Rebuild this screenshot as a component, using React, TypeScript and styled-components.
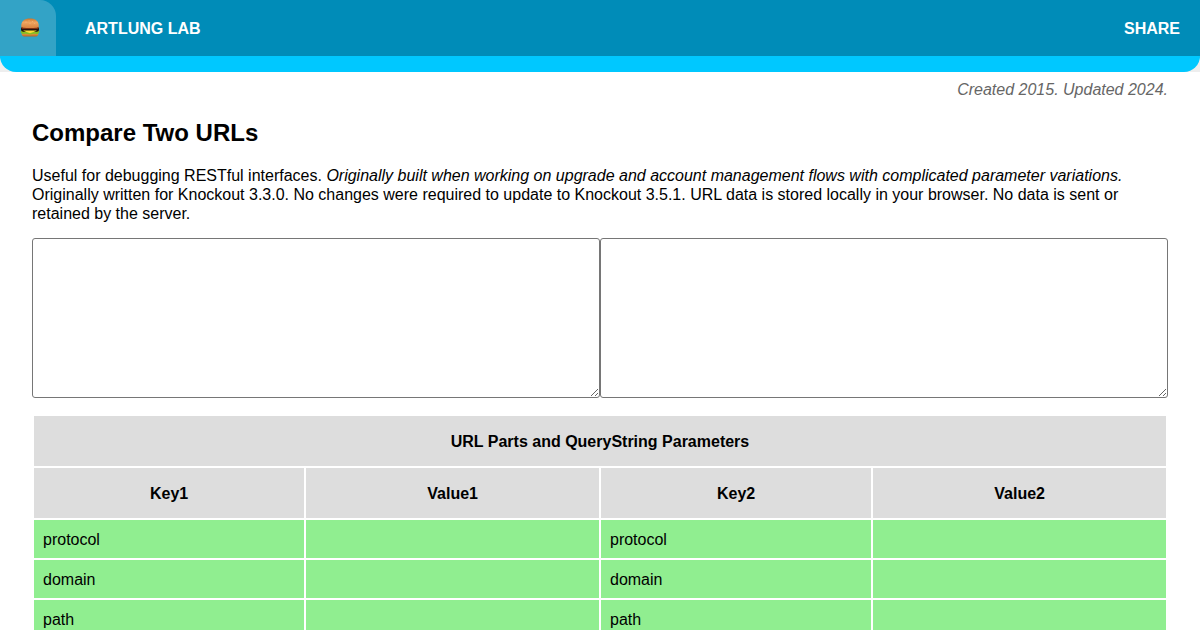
import React, { useState } from 'react';
import styled, { createGlobalStyle } from 'styled-components';

const GlobalStyle = createGlobalStyle`
  * { box-sizing: border-box; }
  html { overflow-x: hidden; scrollbar-width: none; }
  body {
    margin: 0;
    background: #fff;
    color: #000;
    font: 16px/19px "Liberation Sans", Helvetica, Arial, sans-serif;
  }
`;

const HeaderBackdrop = styled.div`
  background: #eee;
`;

const Header = styled.header`
  display: flex;
  align-items: stretch;
  height: 72px;
  background: #008cb8;
  border-bottom: 16px solid #00c8ff;
  border-radius: 0 0 16px 16px;
`;

const MenuButton = styled.button`
  display: flex;
  align-items: center;
  justify-content: center;
  width: 56px;
  padding: 0 0 0 4px;
  border: 0;
  border-radius: 0 16px 0 0;
  background: #33a3c6;
  cursor: pointer;
`;

const HeaderNav = styled.nav`
  display: flex;
  flex: 1;
  align-items: center;
  justify-content: space-between;
  padding: 1px 20px 0 29px;
`;

const HeaderLink = styled.a`
  color: #fff;
  font-weight: bold;
  text-decoration: none;
  text-transform: uppercase;
`;

const Main = styled.main`
  padding: 8px 32px 32px;
`;

const Dates = styled.p`
  margin: 0;
  color: #666;
  font-style: italic;
  text-align: right;
`;

const Title = styled.h1`
  margin: 20px 0 19px;
  font-size: 24px;
  line-height: 28px;
`;

const Intro = styled.p`
  margin: 0 0 15px;
`;

const Inputs = styled.div`
  display: flex;
  margin-bottom: 16px;
`;

const UrlInput = styled.textarea`
  flex: 1;
  min-width: 0;
  height: 160px;
  margin: 0;
  padding: 8px;
  border: 1px solid #767676;
  border-radius: 3px;
  background: #fff;
  font: inherit;
`;

const Table = styled.table`
  width: 100%;
  table-layout: fixed;
  border-collapse: separate;
  border-spacing: 2px;
`;

const Column = styled.col<{ $wide?: boolean }>`
  width: ${(p) => (p.$wide ? '26%' : '24%')};
`;

const HeadCell = styled.th`
  padding: 16px 16px 15px;
  background: #ddd;
`;

const Cell = styled.td`
  padding: 10px 9px 9px;
  background: lightgreen;
  overflow-wrap: anywhere;
`;

const Burger = () => (
  <svg width="20" height="20" viewBox="0 0 20 20" aria-hidden="true">
    <defs>
      <linearGradient id="bun-top" x1="0" y1="0" x2="0" y2="1">
        <stop offset="0" stopColor="#c9742b" />
        <stop offset="0.4" stopColor="#f0a560" />
        <stop offset="1" stopColor="#d9833f" />
      </linearGradient>
      <linearGradient id="bun-bottom" x1="0" y1="0" x2="0" y2="1">
        <stop offset="0" stopColor="#e9a552" />
        <stop offset="1" stopColor="#b8641f" />
      </linearGradient>
    </defs>
    <path d="M1.800 15h16.400v1.200c0 1.700-1.400 2.400-3.400 2.400H5.200c-2 0-3.400-.7-3.400-2.400z" fill="url(#bun-bottom)" />
    <path d="M.8 12.700q2-1.200 9.200-1.200t9.200 1.200q.6 1.900-.8 2.700-1.500.9-3 .4-1.300-.2-2.700.3-2.700.6-5.400 0-1.400-.5-2.700-.3-1.500.5-3-.4Q.2 14.600.8 12.700z" fill="#86bd22" />
    <path d="M1 10h18v2q-.3 1.500-2.200 1.700H3.200Q1.300 13.500 1 12z" fill="#26130c" />
    <path d="M3 12.600h14l-2.800 1.100-4.200 1.500-4.200-1.500z" fill="#fbdc35" />
    <path d="M1.200 9h17.600q.4 1.500-1.300 1.700H2.500Q.8 10.500 1.200 9z" fill="#9c3c16" />
    <path d="M1.200 8C1.300 3 4.400.4 10 .4S18.700 3 18.800 8c0 1.600-3.300 2.100-8.800 2.100S1.200 9.600 1.200 8z" fill="url(#bun-top)" />
    <g fill="#fbd9a1">
      <circle cx="6" cy="4" r=".4" />
      <circle cx="9" cy="2.800" r=".4" />
      <circle cx="12.500" cy="3.600" r=".4" />
      <circle cx="14.800" cy="5.300" r=".4" />
      <circle cx="10" cy="5.200" r=".4" />
    </g>
  </svg>
);

const parts = ['protocol', 'domain', 'path'] as const;

function parseUrl(text: string): Record<string, string> {
  try {
    const url = new URL(text.trim());
    return { protocol: url.protocol, domain: url.host, path: url.pathname };
  } catch {
    return {};
  }
}

export default function App() {
  const [first, setFirst] = useState('');
  const [second, setSecond] = useState('');
  const left = parseUrl(first);
  const right = parseUrl(second);

  return (
    <>
      <GlobalStyle />
      <HeaderBackdrop>
        <Header>
          <MenuButton type="button" aria-label="Menu">
            <Burger />
          </MenuButton>
          <HeaderNav>
            <HeaderLink href="#lab">Artlung Lab</HeaderLink>
            <HeaderLink href="#share">Share</HeaderLink>
          </HeaderNav>
        </Header>
      </HeaderBackdrop>
      <Main>
        <Dates>Created 2015. Updated 2024.</Dates>
        <Title>Compare Two URLs</Title>
        <Intro>
          Useful for debugging RESTful interfaces.{' '}
          <em>
            Originally built when working on upgrade and account management flows with complicated
            parameter variations.
          </em>{' '}
          Originally written for Knockout 3.3.0. No changes were required to update to Knockout
          3.5.1. URL data is stored locally in your browser. No data is sent or retained by the
          server.
        </Intro>
        <Inputs>
          <UrlInput aria-label="First URL" value={first} onChange={(e) => setFirst(e.target.value)} />
          <UrlInput aria-label="Second URL" value={second} onChange={(e) => setSecond(e.target.value)} />
        </Inputs>
        <Table>
          <colgroup>
            <Column />
            <Column $wide />
            <Column />
            <Column $wide />
          </colgroup>
          <thead>
            <tr>
              <HeadCell colSpan={4}>URL Parts and QueryString Parameters</HeadCell>
            </tr>
            <tr>
              <HeadCell>Key1</HeadCell>
              <HeadCell>Value1</HeadCell>
              <HeadCell>Key2</HeadCell>
              <HeadCell>Value2</HeadCell>
            </tr>
          </thead>
          <tbody>
            {parts.map((part) => (
              <tr key={part}>
                <Cell>{part}</Cell>
                <Cell>{left[part]}</Cell>
                <Cell>{part}</Cell>
                <Cell>{right[part]}</Cell>
              </tr>
            ))}
          </tbody>
        </Table>
      </Main>
    </>
  );
}
